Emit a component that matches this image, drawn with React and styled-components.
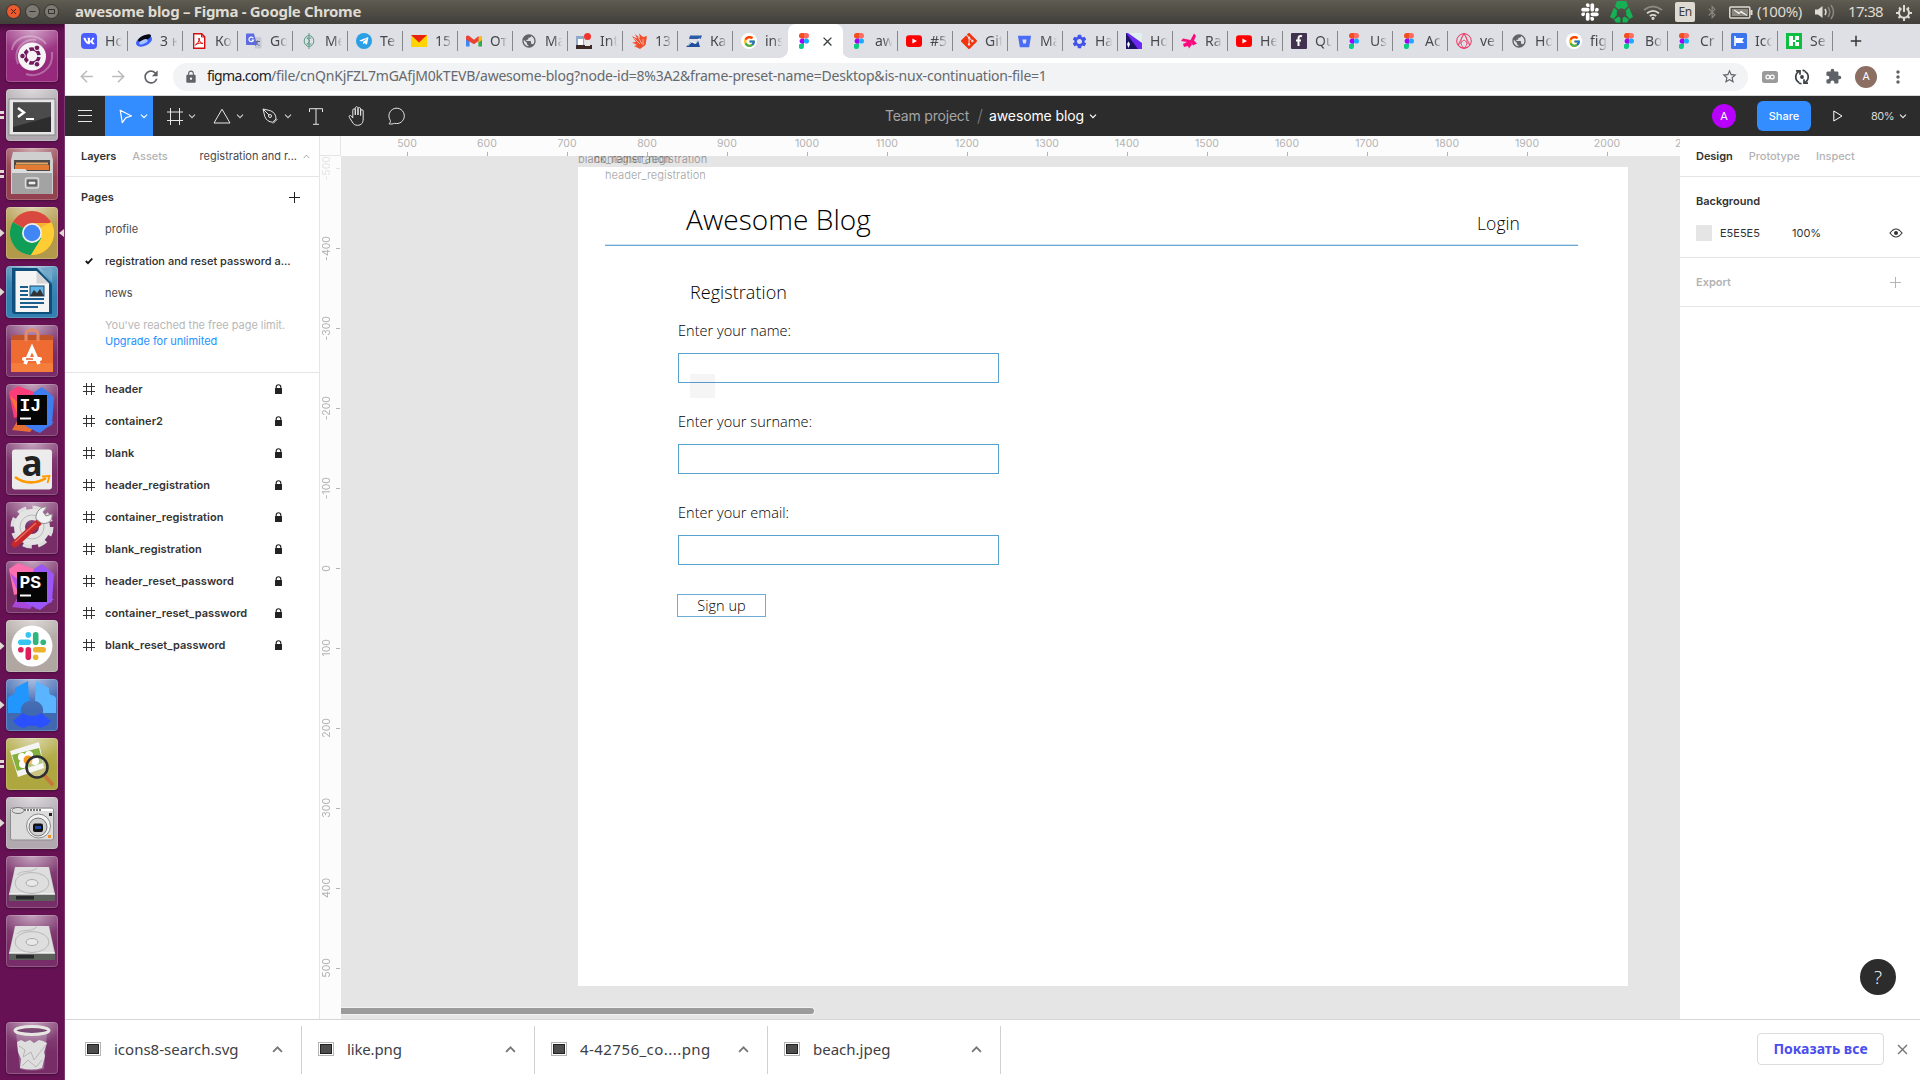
import React from 'react';
import styled, { createGlobalStyle, css } from 'styled-components';
import {
  MdExtension, MdStarBorder, MdLock, MdRefresh, MdArrowBack, MdArrowForward,
  MdClose, MdAdd, MdMoreVert, MdSettings, MdPublic,
} from 'react-icons/md';
import { FaVk, FaBluetoothB, FaSlack, FaTelegramPlane } from 'react-icons/fa';
import { FcGoogle } from 'react-icons/fc';
import { SiGit, SiBitbucket } from 'react-icons/si';

const ui = '"Noto Sans", "Open Sans", sans-serif';
const figma = 'Inter, "Liberation Sans", sans-serif';
const design = '"Open Sans", Lato, sans-serif';

const GlobalStyle = createGlobalStyle`
  * { box-sizing: border-box; }
  body { margin: 0; overflow: hidden; background: #fff; }
  svg { display: block; flex: none; }
`;

const Screen = styled.div`
  width: 1920px; height: 1080px; overflow: hidden;
  display: flex; flex-direction: column;
`;

/* ---------- system bar ---------- */
const SystemBar = styled.header`
  height: 24px; flex: none; display: flex; align-items: center;
  padding: 0 8px 0 6px;
  background: linear-gradient(#5f5c52 0, #57544b 25%, #403f3a 100%);
  color: #dfdbd2; font-family: ${ui};
`;
const WindowButtons = styled.div`display: flex; gap: 4px; width: 69px;`;
const WindowTitle = styled.div`
  font-size: 15px; font-weight: 700; letter-spacing: -0.3px; line-height: 22px; height: 24px; flex: 1;
`;
const Tray = styled.div`display: flex; align-items: center; height: 24px;`;
const TrayItem = styled.div`
  display: flex; align-items: center; justify-content: center;
  width: ${(p) => p.$w}px; margin-right: ${(p) => p.$gap || 0}px;
`;
const TrayText = styled.span`
  font-size: 15px; line-height: 23px; height: 24px; white-space: nowrap;
  letter-spacing: ${(p) => p.$ls}px; width: ${(p) => p.$w}px; margin-right: ${(p) => p.$gap || 0}px;
`;
const Lang = styled.span`
  width: 20px; height: 20px; border-radius: 2px; margin-right: 12px; background: #dfdbd2;
  color: #3c3b37; font-size: 12px; line-height: 20px; text-align: center; letter-spacing: -0.5px;
`;

const Body = styled.div`flex: 1; display: flex; min-height: 0;`;

/* ---------- launcher ---------- */
const Launcher = styled.nav`
  width: 65px; flex: none; padding: 6px 0; display: flex; flex-direction: column; gap: 7px;
  background: linear-gradient(#3e0a34 0, #651153 8px); border-right: 1px solid #7c3a70;
`;
const LauncherRow = styled.div`
  display: flex; align-items: center; height: 52px;
  margin-top: ${(p) => (p.$last ? 'auto' : '0')};
`;
const Pip = styled.div`width: 6px; height: 12px; flex: none;`;
const Tile = styled.div`
  width: 52px; height: 52px; border-radius: 4px; flex: none;
  background:
    radial-gradient(ellipse 60% 45% at 50% 0, rgba(255,255,255,.5), rgba(255,255,255,0)),
    linear-gradient(rgba(255,255,255,.14), rgba(255,255,255,0) 60%),
    ${(p) => p.$color};
  box-shadow: inset 0 0 0 1px rgba(255,255,255,.2), 0 1px 2px rgba(0,0,0,.3);
`;

/* ---------- browser ---------- */
const Browser = styled.div`flex: 1; min-width: 0; display: flex; flex-direction: column; background: #fff;`;
const TabStrip = styled.div`
  height: 34px; flex: none; display: flex; align-items: center; padding-left: 8px; background: #dee0e6;
`;
const tabActive = css`
  position: relative; height: 34px; background: #fff; border-radius: 8px 8px 0 0;
  &::before, &::after {
    content: ''; position: absolute; bottom: 0; width: 8px; height: 8px;
  }
  &::before { left: -8px; background: radial-gradient(circle at 0 0, transparent 7.5px, #fff 8px); }
  &::after { right: -8px; background: radial-gradient(circle at 100% 0, transparent 7.5px, #fff 8px); }
`;
const Tab = styled.div`
  width: 55px; height: 20px; flex: none; display: flex; align-items: center; gap: 8px; padding-left: 8px;
  border-right: 1px solid ${(p) => (p.$line ? '#85878b' : 'transparent')};
  ${(p) => p.$active && tabActive}
`;
const Favicon = styled.div`
  width: 16px; height: 16px; flex: none; display: flex; align-items: center; justify-content: center;
  border-radius: ${(p) => p.$radius || 0}; background: ${(p) => p.$bg || 'none'};
`;
const TabTitle = styled.span`
  width: 18px; overflow: hidden; white-space: nowrap; color: #45484d;
  font: 14px/20px ${ui};
  mask-image: linear-gradient(90deg, #000 45%, transparent 96%);
`;
const NewTab = styled.div`padding-left: 14px; color: #333;`;

const AddressBar = styled.div`
  height: 38px; flex: none; display: flex; align-items: center; padding: 0 0 0 12px;
  border-bottom: 1px solid #d5d6d9;
`;
const NavButton = styled.div`width: 32px; color: ${(p) => (p.$off ? '#babcbe' : '#5f6368')};`;
const Omnibox = styled.div`
  width: 1575px; flex: none; height: 28px; border-radius: 14px; background: #f1f3f4;
  display: flex; align-items: center; padding: 0 10px 0 11px; color: #5f6368;
`;
const Url = styled.div`
  flex: 1; height: 28px; margin-left: 9px; white-space: nowrap; font: 14px/26px ${ui}; letter-spacing: -0.22px; color: #66696e;
`;
const Domain = styled.span`color: #202124; letter-spacing: -0.66px;`;
const Extensions = styled.div`
  display: flex; align-items: center; margin-left: 13px; color: #5f6368;
`;
const Ext = styled.div`width: ${(p) => p.$w}px; display: flex; justify-content: center;`;
const Profile = styled.div`
  width: 22px; height: 22px; margin: 0 11px 0 13px; border-radius: 50%; background: #8d6e63; color: #fff;
  font: 11px/22px Roboto, sans-serif; text-align: center;
`;

/* ---------- editor ---------- */
const Toolbar = styled.div`
  height: 40px; flex: none; display: flex; align-items: center; background: #2c2c2c; color: #fff;
  font-family: ${figma};
`;
const Tool = styled.div`
  width: ${(p) => p.$w}px; height: 40px; display: flex; align-items: center; flex: none;
  padding-left: ${(p) => p.$pad || 0}px; gap: ${(p) => p.$gap || 0}px;
  background: ${(p) => (p.$active ? '#338dff' : 'none')};
`;
const Crumbs = styled.div`
  margin-left: 473px; width: 600px; display: flex; align-items: center; font-size: 14px; line-height: 40px;
`;
const Team = styled.span`color: #a5a5a5; letter-spacing: -0.2px; width: 92px;`;
const Slash = styled.span`color: #7a7a7a; width: 12px; font-size: 17px; font-weight: 300;`;
const FileName = styled.span`letter-spacing: -0.11px; margin-right: 5px;`;
const ToolbarEnd = styled.div`margin-left: auto; display: flex; align-items: center; padding-right: 13px;`;
const UserBadge = styled.div`
  width: 24px; height: 24px; border-radius: 50%; background: #b800ff; font-size: 11px; line-height: 24px;
  text-align: center; margin-right: 21px;
`;
const Share = styled.div`
  width: 54px; height: 30px; border-radius: 6px; background: #338dff; font-size: 11px; font-weight: 500;
  line-height: 30px; text-align: center; margin-right: 22px;
`;
const ZoomLevel = styled.span`font-size: 11px; letter-spacing: -0.5px; margin: 0 5px 0 28px; color: #d8d8d8;`;

const Editor = styled.div`flex: 1; min-height: 0; display: flex; font-family: ${figma}; font-size: 11px; color: #333;`;
const LeftPanel = styled.aside`
  width: 255px; flex: none; border-right: 1px solid #e5e5e5; background: #fff;
`;
const PanelTabs = styled.div`
  height: 41px; display: flex; align-items: center; border-bottom: 1px solid #e5e5e5; padding: 0 9px 0 16px;
`;
const PanelTab = styled.span`
  font-weight: ${(p) => (p.$on ? 600 : 500)}; color: ${(p) => (p.$on ? '#333' : '#b3b3b3')};
  margin-right: 16px; letter-spacing: -0.04px;
`;
const PageName = styled.span`margin: 0 6px 0 auto; color: #4a4a4a;`;
const Pages = styled.section`height: 196px; border-bottom: 1px solid #e5e5e5;`;
const PagesHead = styled.div`
  height: 40px; margin-bottom: -4px; display: flex; align-items: center; justify-content: space-between;
  padding: 0 19px 0 16px; font-weight: 600;
`;
const PageRow = styled.div`
  height: 32px; display: flex; align-items: center; padding-left: 20px; color: #4a4a4a;
  font-weight: ${(p) => (p.$on ? 500 : 400)};
  ${(p) => p.$on && 'color: #2c2c2c;'}
`;
const Mark = styled.div`width: 20px; flex: none;`;
const Limit = styled.div`padding: 8px 0 0 40px; line-height: 16px; color: #b8b8b8; letter-spacing: -0.04px;`;
const Upgrade = styled.div`color: #2492ff; line-height: 16px;`;
const LayerRow = styled.div`
  height: 32px; display: flex; align-items: center; padding: 0 37px 0 18px; font-weight: 600;
`;
const LayerName = styled.span`flex: 1; margin-left: 10px; letter-spacing: 0.06px;`;

const Workspace = styled.main`
  width: 1360px; flex: none; display: grid; grid-template: 20px 1fr / 21px 1fr; background: #fcfcfc;
`;
const Corner = styled.div`border-right: 1px solid #e5e5e5; border-bottom: 1px solid #e5e5e5;`;
const RulerX = styled.div`display: flex; padding-left: 26px; overflow: hidden; color: #b3b3b3;`;
const MarkX = styled.div`
  width: 80px; height: 20px; flex: none; display: flex; flex-direction: column; align-items: center;
  font-size: 10.5px; line-height: 16px;
  &::after { content: ''; width: 1px; height: 4px; background: #b3b3b3; }
`;
const RulerY = styled.div`overflow: hidden; color: #b3b3b3; display: flex; flex-direction: column;`;
const MarkY = styled.div`
  height: 80px; width: 20px; flex: none; display: flex; align-items: center; justify-content: space-between;
  font-size: 10.5px; opacity: ${(p) => (p.$faded ? 0.35 : 1)};
  &:first-child { margin-top: -28px; }
  &::after { content: ''; width: 4px; height: 1px; background: #b3b3b3; }
`;
const Turned = styled.span`writing-mode: vertical-rl; transform: rotate(180deg); line-height: 13px; width: 13px;`;

const Canvas = styled.div`
  position: relative; overflow: hidden; background: #e5e5e5; padding: 11px 0 0 237px;
`;
const FrameLabel = styled.span`
  position: absolute; left: ${(p) => p.$x}px; top: ${(p) => p.$y}px; line-height: 14px; color: rgba(0,0,0,.34);
`;
const Artboard = styled.div`
  width: 1050px; height: 819px; background: #fff; color: #000; font-family: ${design}; font-weight: 300;
`;
const BlogHeader = styled.div`
  margin: 0 0 0 27px; width: 973px; height: 79px; display: flex; justify-content: space-between; align-items: flex-start;
  padding: 0 58px 0 81px; border-bottom: 1px solid #69a9d3; box-shadow: inset 0 -1px #cfe4f2;
`;
const BlogTitle = styled.div`margin-top: 35px; font-size: 28px; line-height: 34px; letter-spacing: .07px;`;
const Login = styled.div`margin-top: 45px; font-size: 17.5px; line-height: 22px; letter-spacing: .06px;`;
const Form = styled.div`width: 321px; margin: 35px 0 0 100px; font-size: 14.5px; letter-spacing: .04px;`;
const FormTitle = styled.div`padding-left: 12px; font-size: 18px; line-height: 22px; letter-spacing: .06px; margin-bottom: 19px;`;
const Fields = styled.div`display: flex; flex-direction: column; gap: 30px;`;
const Label = styled.div`line-height: 18px; margin-bottom: 13px;`;
const Field = styled.div`height: 30px; border: 1px solid #5ba1d0;`;
const SignUp = styled.div`
  width: 89px; height: 23px; margin: 29px 0 0 -1px; border: 1px solid #6cacd6; text-align: center; line-height: 21px;
`;
const GhostCursor = styled.div`
  position: absolute; left: 349px; top: 218px; width: 25px; height: 24px; background: rgba(0,0,0,.04);
`;
const ScrollThumb = styled.div`
  position: absolute; left: 0; bottom: 5px; width: 473px; height: 6px; border-radius: 0 3px 3px 0;
  background: #9b9b9b; box-shadow: 0 0 0 1px #f0f0f0;
`;

const RightPanel = styled.aside`flex: 1; background: #fff; display: flex; flex-direction: column;`;
const Section = styled.section`border-bottom: 1px solid #e5e5e5; padding: ${(p) => p.$pad};`;
const SectionTitle = styled.div`
  display: flex; justify-content: space-between; align-items: center; line-height: 16px;
  font-weight: 600; color: ${(p) => (p.$muted ? '#b3b3b3' : '#333')};
`;
const ColorRow = styled.div`display: flex; align-items: center; height: 16px; margin-top: 16px;`;
const Swatch = styled.div`width: 16px; height: 16px; background: #e5e5e5; margin-right: 8px;`;
const Value = styled.span`width: ${(p) => p.$w}px;`;
const HelpSlot = styled.div`margin-top: auto; padding: 0 24px 24px; display: flex; justify-content: flex-end;`;
const Help = styled.div`
  width: 36px; height: 36px; border-radius: 50%; background: #2c2c2c; color: #fff; text-align: center;
  font: 300 19px/36px "Open Sans", sans-serif;
`;

/* ---------- downloads ---------- */
const Downloads = styled.footer`
  height: 61px; flex: none; border-top: 1px solid #d5d6d9; display: flex; align-items: center; background: #fff;
  font-family: ${ui};
`;
const Download = styled.div`
  width: 233px; height: 48px; display: flex; align-items: center; padding: 0 18px 2px 16px;
  border-right: 1px solid #cfd0d2;
  &:first-child { width: 237px; padding-left: 20px; }
`;
const FileLabel = styled.span`
  flex: 1; margin-left: 13px; font-size: 15px; color: #3d4045; letter-spacing: ${(p) => p.$ls}px;
`;
const ShowAll = styled.div`
  margin-left: auto; width: 127px; height: 32px; margin-bottom: 2px; border: 1px solid #dadce0; border-radius: 4px; color: #4a4df0;
  font-size: 14px; font-weight: 700; line-height: 30px; text-align: center;
`;
const CloseSlot = styled.div`width: 36px; padding-bottom: 2px; display: flex; justify-content: center; color: #75777a;`;

/* ---------- small drawings ---------- */
const Chevron = ({ up, color = '#c9c9c9', w = 8, sw = 1.2 }) => (
  <svg width={w} height={w} viewBox="0 0 8 8" fill="none" stroke={color} strokeWidth={sw}>
    <path d={up ? 'M.8 5.8 4 2.4l3.2 3.4' : 'M1 2.6 4 5.6l3-3'} />
  </svg>
);
const Plus = ({ color }) => (
  <svg width="11" height="11" stroke={color}><path d="M5.5 0v11M0 5.5h11" /></svg>
);
const HashIcon = () => (
  <svg width="12" height="12" stroke="#333" fill="none"><path d="M3.5 0v12M8.5 0v12M0 3.5h12M0 8.5h12" /></svg>
);
const LockIcon = () => (
  <svg width="7" height="10" fill="#222"><rect y="4" width="7" height="6" rx=".5" /><path d="M1.2 5V3a2.3 2.3 0 0 1 4.6 0v2" fill="none" stroke="#222" strokeWidth="1.1" /></svg>
);
const FigmaMark = () => (
  <svg width="10" height="16" viewBox="0 0 10 16">
    <path d="M2.7 0H5v5.4H2.7a2.7 2.7 0 0 1 0-5.4z" fill="#f24e1e" /><path d="M5 0h2.3a2.7 2.7 0 0 1 0 5.4H5z" fill="#ff6d62" />
    <path d="M2.7 5.4H5v5.3H2.7a2.7 2.7 0 0 1 0-5.3z" fill="#a100ff" /><circle cx="7.4" cy="8" r="2.6" fill="#1aaaff" />
    <path d="M2.7 10.7H5v2.6a2.7 2.7 0 1 1-2.3-2.6z" fill="#0acf83" />
  </svg>
);
const Globe = () => <MdPublic size={16} color="#5f6368" />;
const YouTube = () => (
  <svg width="16" height="16"><rect x="0" y="2.3" width="16" height="11.6" rx="3" fill="#f00" /><path d="M6.4 5.4v5.2L11 8z" fill="#fff" /></svg>
);
const Google = () => <FcGoogle size={13} />;
const s16 = { width: 16, height: 16, viewBox: '0 0 16 16' };

const tabs = [
  ['Но', <FaVk size={12} color="#fff" />, '#4a5dff', '4px'],
  ['3 к', <svg {...s16}><ellipse cx="8" cy="8" rx="8.4" ry="5" transform="rotate(-24 8 8)" fill="#3d63ff" /><ellipse cx="8.5" cy="5.2" rx="7" ry="2.6" transform="rotate(-24 8 5)" fill="#06080f" /><ellipse cx="7.5" cy="9" rx="4.5" ry="2" transform="rotate(-24 7 9)" fill="#a9c4ff" /></svg>],
  ['Ко', <svg {...s16}><path d="M2.7.7h8l3 3.2v11.4h-11z" fill="#fff" stroke="#d40f0f" strokeWidth="1.4" /><path d="M10.5 1v3H14" fill="none" stroke="#d40f0f" /><path d="M8 5c.6 3-1.2 5.500-3.600 7 2.500-2 5-2.300 7.500-1.600C10 10.500 8 8.500 8 5z" fill="none" stroke="#d40f0f" /></svg>],
  ['Go', <svg {...s16}><path d="M7 4h7.500q1 0 1 1v9.500q0 1-1 1H9z" fill="#c7cad4" /><path d="M9 8.500h5M11.500 7.500c0 3-1 4-2.500 5M10 9c1 2 2 3 3.500 3.500" stroke="#5f6a86" fill="none" /><path d="M1 .5h7l3 11.500H1q-1 0-1-1V1.500q0-1 1-1z" fill="#5d6bdf" /><path d="M7.300 5.200A2.300 2.300 0 1 0 7.500 7H5.500" stroke="#fff" fill="none" strokeWidth="1.200" /></svg>],
  ['Ме', <svg {...s16} stroke="#5c9a86" fill="none"><ellipse cx="8" cy="8" rx="4.800" ry="5.500" /><path d="M8 0v16M5.500 5h5M5.500 11h5M6 5l3 3-3 3" /></svg>],
  ['Те', <FaTelegramPlane size={10} color="#fff" />, '#2a9fe6', '50%'],
  ['15', <svg {...s16}><path d="M0 2h16v12H0z" fill="#ffd400" /><path d="M0 2h16L8 9.500z" fill="#e8230e" /></svg>],
  ['От', <svg {...s16}><path d="M0 3.500v10h3.600V7z" fill="#4285f4" /><path d="M16 3.500v10h-3.600V7z" fill="#34a853" /><path d="M12.400 3.800 16 3v4l-3.600 2.600z" fill="#fbbc04" /><path d="M0 4c0-1.700 2-2 3.200-1L8 6.700 12.600 3v5L8 11.300 0 6.500z" fill="#ea4335" /></svg>],
  ['Ма', <Globe />],
  ['Int', <svg {...s16}><path d="M0 3h8v12H0z" fill="#8fa9c8" /><path d="M0 12h16v4H0z" fill="#3c2a27" /><path d="M2 6h5v6H2z" fill="#fff" /><path d="M9 7h5v6H9z" fill="#e9e6e4" /><circle cx="11.500" cy="3.500" r="3.500" fill="#f0332e" /></svg>],
  ['13', <svg {...s16}><path d="M1 3l5 2.500L4 1l5 4L8 .5l4 3.500 4-1-1.500 9L9 16l-6-3 3-1-5-2.500 4-.5z" fill="#f1502f" /><path d="M3 5l6 6M7 4l4 7M12 6v6" stroke="#fbd9cf" strokeWidth=".7" /></svg>],
  ['Ка', <svg {...s16}><path d="M4 2.500h12l-1.500 3.500H3z" fill="#2b5ca8" /><path d="M15 3l-3 4 2 7H0l5-5 4 2z" fill="#1f4f9d" /><path d="M2 12.500 6.500 8.500l3.500 2L13.500 5" stroke="#fff" fill="none" strokeWidth=".8" /></svg>],
  ['ins', <Google />, '#fff', '50%'],
  null,
  ['aw', <FigmaMark />],
  ['#5', <YouTube />],
  ['Git', <SiGit size={16} color="#f4320b" />],
  ['Ма', <SiBitbucket size={13} color="#4a6cf7" />],
  ['Ha', <MdSettings size={17} color="#4353e8" />],
  ['Но', <svg {...s16}><path d="M0 0h16v16H0z" fill="#6d28f5" /><path d="M2 0h14v10z" fill="#dff0ee" /><path d="M0 0l12 16H0z" fill="#1b1464" /><path d="M1 11l1.500-2.500L4 11l-1.500 4z" fill="#fff" /></svg>],
  ['Ra', <svg {...s16} fill="#fb0a7d"><path d="M9 8 13 .5l2 2.500-2 4.500 3 3-4 2z" /><path d="M9.500 7 2 5.500 0 8l6 1-4 2 1 3 4-1 1 2.500 3-4z" /></svg>],
  ['Не', <YouTube />],
  ['Qu', <svg {...s16}><rect width="16" height="16" rx="1" fill="#413250" /><path d="M11 3.200C8.500 2.500 7.500 3.500 7.500 5.500V13M5 7.500h5" stroke="#fff" strokeWidth="2" fill="none" /></svg>],
  ['Us', <FigmaMark />],
  ['Ac', <FigmaMark />],
  ['ve', <svg {...s16} fill="none" stroke="#f0305f"><circle cx="8" cy="8" r="7.300" /><path d="M8 .5 2 12c3 4 9 4 12 0zM8 .5C4 6 4 12 8 15.500 12 12 12 6 8 .5M2 12l6-5 6 5" strokeWidth=".8" /></svg>],
  ['Но', <Globe />],
  ['fig', <Google />, '#fff', '50%'],
  ['Bo', <FigmaMark />],
  ['Cr', <FigmaMark />],
  ['Ico', <svg {...s16}><rect width="16" height="16" rx="1.500" fill="#3b74ec" /><path d="M4 3v10" stroke="#fff" strokeWidth="1.600" /><path d="M4.500 5H13l-1.800 2.500L13 10H4.500z" fill="#fff" /></svg>],
  ['Se', <svg {...s16}><path d="M0 0h16v16H0z" fill="#0dbf3f" /><path d="M3 3h4v10H3zM9 3h4v4H9zM9 9h4v4H9zM7 7h3v2H7z" fill="#fff" /></svg>],
];

const Jet = ({ text, a, b, c }) => (
  <svg width="52" height="52">
    <path d="M3 8 12 2l16 6 6 18-26 8z" fill={a} /><path d="M28 8 36 3l12 10-2 28-16 7-10-14z" fill={b} />
    <path d="M4 12l9 22-7 12 18 2 10-12z" fill={c} opacity=".85" /><path d="M14 36h20l14 2-14 11-13-6z" fill={b} />
    <path d="M11 11h30v30H11z" fill="#050505" /><path d="M14 34.500h11" stroke="#fff" strokeWidth="2" />
    <text x="13.500" y="27" fill="#fff" fontFamily="Liberation Mono, monospace" fontWeight="700" fontSize="18">{text}</text>
  </svg>
);
const Disk = () => (
  <svg width="52" height="52">
    <path d="M9 11h34l6 27v6H3v-6z" fill="#c9c9c9" /><path d="M9.500 11h33l5.500 27H4z" fill="#dedede" />
    <path d="M3 38.500h46V44q0 1-1 1H4q-1 0-1-1z" fill="#5c615c" /><path d="M10 40h18v3.500H10z" fill="#26282a" />
    <path d="M3 38h46" stroke="#fff" /><ellipse cx="26" cy="27" rx="17" ry="10.500" fill="none" stroke="#b9b9b9" />
    <ellipse cx="26" cy="27" rx="6" ry="3.500" fill="#e8e8e8" stroke="#aaa" /><path d="M11 19c6-6 12-1 20-7" fill="none" stroke="#bbb" />
  </svg>
);

const CLEAR = 'rgba(255,255,255,.12)';
const apps = [
  ['#96297c', null, <svg width="52" height="52"><path d="M6 20C8 4 32 2 40 14M46 22c2 18-14 26-26 22M12 34C6 20 18 8 30 10" fill="none" stroke="#fff" strokeOpacity=".3" strokeWidth="2" /><circle cx="26" cy="26.500" r="14" fill="#f6f4f5" /><circle cx="26" cy="26" r="7" fill="none" stroke="#741b5f" strokeWidth="3.600" strokeDasharray="12.600 2" strokeDashoffset="-1" /><g fill="#741b5f" stroke="#f6f4f5"><circle cx="16.500" cy="26" r="2.800" /><circle cx="31" cy="17.800" r="2.800" /><circle cx="31" cy="34.300" r="2.800" /></g></svg>],
  ['#aea8ae', 'multi', <svg width="52" height="52"><rect x="3" y="10" width="46" height="36" fill="#e6e6e6" stroke="#8a8a8a" /><rect x="7" y="13.500" width="38" height="29.500" fill="#2d2d2d" /><path d="M7 13.500h38v14L7 38z" fill="#4b4b4b" /><path d="m12 19 6 4.500-6 4.500" fill="none" stroke="#fff" strokeWidth="2.400" /><path d="M20 30h8" stroke="#fff" strokeWidth="2" /></svg>],
  ['#934150', 'multi', <svg width="52" height="52"><path d="M7 4h38l2 8v34H5V12z" fill="#cfcfcf" /><path d="M8 12h36v12H8z" fill="#4c4a48" /><path d="M10 14.500h32v2H10z" fill="#e9a45e" /><path d="M9 17h34v5H9z" fill="#e37b33" /><path d="M6 21h13l2 2h25v23H6z" fill="#a3a3a3" /><path d="M6 21h13l2 2h25v2H6z" fill="#dcdcdc" /><rect x="19.500" y="30" width="13" height="10" rx="2" fill="#8b8b8b" stroke="#ddd" strokeWidth="1.500" /><rect x="22" y="33" width="8" height="4" fill="#eee" stroke="#333" /></svg>],
  ['#b3994a', 'focus', <svg width="52" height="52"><circle cx="26" cy="26" r="22" fill="#fc3" /><path d="M26 26 6.900 15A22 22 0 0 1 45 15z" fill="#d9493f" /><path d="M6.900 15A22 22 0 0 0 25 48L35.500 31 26 26z" fill="#0f9d58" /><path d="M25 48A22 22 0 0 0 45.500 16H26l9.500 15z" fill="#fc3c" /><circle cx="26" cy="26" r="10" fill="#f1f1f1" /><circle cx="26" cy="26" r="8.300" fill="#4285f4" /></svg>],
  ['#3480b0', 'one', <svg width="52" height="52"><path d="M6 2h25l15 16v30H9q-3 0-3-3z" fill="#0f4f7c" /><path d="M35 2h11v14z" fill="#72a8c9" /><path d="M9.500 5h21L43 17.500V46h-33.500z" fill="#f5f5f5" /><path d="M30.500 5 43 17.500H30.500z" fill="#d5d5d5" /><path d="M14 21h8M14 25h8M14 29h8M14 33h24M14 37h24M14 41h18" stroke="#1b5e8c" strokeWidth="1.800" /><rect x="24" y="20" width="14" height="10" fill="#5fb3e6" stroke="#1b4a68" /><path d="m24 30 4-6 3 3 3-4 4 7z" fill="#333" /></svg>],
  [CLEAR, null, <svg width="52" height="52"><path d="M5 12l3-2h36l3 2v35H5z" fill="#ee6c32" /><path d="M5 12l3-2h36l3 2v3H5z" fill="#c2542a" /><path d="M5 38h42v9H5z" fill="#f57d3c" /><path d="M20 16V9q0-4 6-4t6 4v7" fill="none" stroke="#e28b6b" strokeWidth="3" /><path d="m19 39 7-16 7 16" fill="none" stroke="#fff" strokeWidth="3.600" /><path d="M18 34h16" stroke="#fff" strokeWidth="4" strokeLinecap="round" /><path d="M20 34h7" stroke="#e05e28" strokeWidth="1.500" /></svg>],
  [CLEAR, null, <Jet text="IJ" a="#fb3d7a" b="#3f7cf0" c="#f87a2c" />],
  [CLEAR, null, <svg width="52" height="52"><rect x="6" y="6.500" width="40" height="40" rx="3" fill="#ececec" /><text x="15.500" y="33" fontFamily="Open Sans, sans-serif" fontWeight="700" fontSize="35" fill="#222">a</text><path d="M9 34c9 7 22 7 31 1" fill="none" stroke="#f90" strokeWidth="2.600" /><path d="m36 33.500 7.500-.5-2 7" fill="none" stroke="#f90" strokeWidth="1.800" /></svg>],
  [CLEAR, null, <svg width="52" height="52"><circle cx="26" cy="25" r="18.500" fill="none" stroke="#dcdcdc" strokeWidth="6" strokeDasharray="8.500 6.030" /><circle cx="26" cy="25" r="12.500" fill="none" stroke="#e4e4e4" strokeWidth="11" /><circle cx="26" cy="25" r="12" fill="none" stroke="#bcbcbc" /><path d="m9 42 23-21" stroke="#c6282a" strokeWidth="7" strokeLinecap="round" /><path d="m9 40 21-19" stroke="#e86a62" strokeWidth="1.500" /><path d="M30 17c-1-7 5-13 11-12l-4 5 3 4 6-2c1 7-5 11-11 9z" fill="#f1f1f1" stroke="#8d8d8d" /></svg>],
  [CLEAR, null, <Jet text="PS" a="#fb6fae" b="#9a56f7" c="#b04cf0" />],
  ['#b0a6a2', 'one', <svg width="52" height="52"><circle cx="26" cy="26" r="20.500" fill="#fff" /><g strokeWidth="5.600" strokeLinecap="round"><path d="M14.800 22.300h7.500" stroke="#36c5f0" /><path d="M22.300 14.800v.1" stroke="#36c5f0" /><path d="M29.700 14.800v7.500" stroke="#2eb67d" /><path d="M37.200 22.300h.1" stroke="#2eb67d" /><path d="M29.700 29.700h7.500" stroke="#ecb22e" /><path d="M29.700 37.200v.1" stroke="#ecb22e" /><path d="M22.300 29.700v7.500" stroke="#e01e5a" /><path d="M14.800 29.700h.1" stroke="#e01e5a" /></g></svg>],
  ['#4069b2', 'one', <svg width="52" height="52"><path d="M22 2 9 9c0 4 0 6-2 7-2 0-4 1-5 3v15h13c-1-6 2-11 8-12z" fill="#2196ff" /><path d="M30 2l13 7c0 4 0 6 2 7 2 0 4 1 5 3v15H37c1-6-2-11-8-12z" fill="#5bb4ff" /><path d="M17 34c5 4 13 4 18 0l10 8c-3 4-8 6-11 7q-3-3-8-2-5-1-8 2c-5-1-8-3-11-7z" fill="#2b50ff" /></svg>],
  ['#aea73f', 'multi', <svg width="52" height="52"><path d="m4 13 29-9 5 26-26 9z" fill="#f4f4f4" /><path d="m6 17 27-7 4 15-26 8z" fill="#84b03c" /><g fill="#fff"><circle cx="16" cy="19" r="4" /><circle cx="23" cy="17" r="4" /><circle cx="29" cy="23" r="4" /><circle cx="17" cy="26" r="4" /></g><circle cx="22" cy="22" r="4.500" fill="#f39a1d" /><path d="m39 38 7 8" stroke="#c57a3b" strokeWidth="4" strokeLinecap="round" /><circle cx="31" cy="29" r="10.500" fill="#fff" fillOpacity=".35" stroke="#2c2e31" strokeWidth="2.600" /></svg>],
  ['#b1a8b0', 'one', <svg width="52" height="52"><rect x="4.500" y="11" width="43" height="32" rx="2" fill="#dcdcdc" stroke="#8d8d8d" /><path d="M5 13h42" stroke="#fff" strokeWidth="2" /><ellipse cx="12" cy="13.500" rx="6" ry="3" fill="#ddd" stroke="#777" /><path d="M18 13h18" stroke="#777" strokeDasharray="2 1" strokeWidth="2" /><circle cx="32.500" cy="29" r="12" fill="#f3f3f3" stroke="#888" /><circle cx="32" cy="30" r="9" fill="#cfcfcf" stroke="#777" /><rect x="27" y="26.500" width="10" height="8.500" rx="2" fill="#111" /><path d="M29 29h6v3h-6z" fill="#2148a0" /><path d="M43 16h3v3h-3z" fill="#222" /><path d="M42 38h3v3h-3z" fill="#f0902a" /></svg>],
  [CLEAR, null, <Disk />],
  [CLEAR, null, <Disk />],
  [CLEAR, null, <svg width="52" height="52"><path d="m10 11 4 36q12 3 24 0l3-36z" fill="#d9d4dc" fillOpacity=".3" /><path d="m11 20 4-2 4 2 5-2 4 3 5-3 4 1 4 2-3 9 1 4-3 12q-10 3-22 0l1-9-3-7z" fill="#dedede" /><path d="m13 24 6 4-2 7 8-5 3 8 7-9 5-6M16 44l6-6 8 7 6-7" fill="none" stroke="#b5b5b5" /><ellipse cx="26" cy="8.500" rx="17" ry="4" fill="#5c2a56" fillOpacity=".6" stroke="#e6e6e2" strokeWidth="3" /></svg>],
];
const PipMark = ({ kind }) => (
  <Pip>
    <svg width="5" height="12" fill="#dfdbd2">
      {kind === 'multi' && <path d="M0 2h4v3H0zM0 7h4v3H0z" />}
      {(kind === 'one' || kind === 'focus') && <path d="M0 2l4.500 4L0 10z" />}
    </svg>
  </Pip>
);

const downloads = [
  ['icons8-search.svg', 0], ['like.png', -0.15], ['4-42756_co....png', 0.45], ['beach.jpeg', 0],
];
const layers = ['header', 'container2', 'blank', 'header_registration', 'container_registration',
  'blank_registration', 'header_reset_password', 'container_reset_password', 'blank_reset_password'];
const range = (a, n) => Array.from({ length: n }, (_, i) => a + i * 100);

const WinBtn = ({ fill, line, children }) => (
  <svg width="15" height="16" viewBox="0 0 15 16" fill="none" stroke={line}>
    <circle cx="7.500" cy="7.500" r="7" fill={fill} stroke="#34332f" />{children}
  </svg>
);

export default function App() {
  return (
    <Screen>
      <GlobalStyle />
      <SystemBar>
        <WindowButtons>
          <WinBtn fill="#ea5b2d" line="#4a1c0c"><path d="m5 5 5 5m0-5-5 5" /></WinBtn>
          <WinBtn fill="#7c7a72" line="#33322e"><path d="M4.500 7.500h6" /></WinBtn>
          <WinBtn fill="#7c7a72" line="#33322e"><path d="M4.500 5.500h6v4h-6z" /></WinBtn>
        </WindowButtons>
        <WindowTitle>awesome blog – Figma - Google Chrome</WindowTitle>
        <Tray>
          <TrayItem $w={20} $gap={10}><FaSlack size={20} color="#fff" /></TrayItem>
          <TrayItem $w={23} $gap={10}>
            <svg width="23" height="22" viewBox="0 0 23 22" fill="#17b155">
              <path d="M7 0h9l2 5-3.500 3.500a4.500 4.500 0 0 0-6 0L5 5z" />
              <path d="M4 6.500 7.300 9.700A5 5 0 0 0 7 14l-3.500 4L0 16z" />
              <path d="M19 6.500 15.700 9.700A5 5 0 0 1 16 14l3.500 4L23 16z" />
              <path d="M8.300 15.500 10.500 17v4.500H6l-2-3zM14.700 15.500 12.500 17v4.500H17l2-3z" />
            </svg>
          </TrayItem>
          <TrayItem $w={20} $gap={12}>
            <svg width="20" height="15" viewBox="0 0 20 15" fill="none" stroke="#dfdbd2" strokeWidth="1.800"><path d="M1 5q9-7 18 0" stroke="#8b887f" /><path d="M4 8.200q6-4.600 12 0M6.800 11q3.200-2.300 6.400 0" /><circle cx="10" cy="13.300" r=".7" /></svg>
          </TrayItem>
          <Lang>En</Lang>
          <TrayItem $w={9} $gap={13}><FaBluetoothB size={14} color="#8b887f" /></TrayItem>
          <TrayItem $w={24} $gap={4}>
            <svg width="24" height="13" fill="none" stroke="#dfdbd2"><rect x=".8" y="1" width="20" height="11" rx="1" strokeWidth="1.500" /><path d="M3 3h16v7H3z" fill="#8b887f" stroke="none" /><path d="M22.500 4v5" strokeWidth="2" /><path d="m5 4 5 4 1.500-2L18 9.500 12 5l-1.500 2z" fill="#fff" stroke="#fff" strokeWidth=".6" /></svg>
          </TrayItem>
          <TrayText $w={46} $ls={-0.37} $gap={12}>(100%)</TrayText>
          <TrayItem $w={20} $gap={13}>
            <svg width="20" height="16" viewBox="0 0 20 16" fill="none" strokeWidth="1.500"><path d="M0 5.500h3L7.500 2v12L3 10.500H0z" fill="#dfdbd2" /><path d="M10 5q2 3 0 6" stroke="#dfdbd2" /><path d="M13 3q3.500 5 0 10M16 1q5 7 0 14" stroke="#8b887f" /></svg>
          </TrayItem>
          <TrayText $w={36} $ls={-0.66} $gap={12}>17:38</TrayText>
          <svg width="16" height="17" viewBox="0 0 16 17" fill="none" stroke="#dfdbd2"><path d="M5.500 4.500a5 5 0 1 0 5 0" strokeWidth="2" /><path d="M8 1v7" strokeWidth="2" /><path d="M3 3.500l1.500 1.500M13 3.500 11.500 5M0 9h3M13 9h3M2.500 14l2-2M13.500 14l-2-2M8 14v3" strokeWidth="2" /></svg>
        </Tray>
      </SystemBar>

      <Body>
        <Launcher>
          {apps.map(([color, state, icon], i) => (
            <LauncherRow key={i} $last={i === apps.length - 1}>
              <PipMark kind={state} />
              <Tile $color={color}>{icon}</Tile>
              {state === 'focus' && <svg width="6" height="10" fill="#dfdbd2"><path d="M6 1v8L1 5z" /></svg>}
            </LauncherRow>
          ))}
        </Launcher>

        <Browser>
          <TabStrip>
            {tabs.map((t, i) => t ? (
              <Tab key={i} $line={i !== 12}>
                <Favicon $bg={t[2]} $radius={t[3]}>{t[1]}</Favicon>
                <TabTitle>{t[0]}</TabTitle>
              </Tab>
            ) : (
              <Tab key={i} $active>
                <Favicon><FigmaMark /></Favicon>
                <MdClose size={15} color="#3c4043" />
              </Tab>
            ))}
            <NewTab><MdAdd size={18} /></NewTab>
          </TabStrip>

          <AddressBar>
            <NavButton $off><MdArrowBack size={19} /></NavButton>
            <NavButton $off><MdArrowForward size={19} /></NavButton>
            <NavButton><MdRefresh size={20} /></NavButton>
            <Omnibox>
              <MdLock size={14} />
              <Url><Domain>figma.com</Domain>/file/cnQnKjFZL7mGAfjM0kTEVB/awesome-blog?node-id=8%3A2&amp;frame-preset-name=Desktop&amp;is-nux-continuation-file=1</Url>
              <MdStarBorder size={17} />
            </Omnibox>
            <Extensions>
              <Ext $w={18}><svg width="16" height="12"><rect width="16" height="12" rx="2.500" fill="#9b9b9b" /><circle cx="5.800" cy="6" r="1.900" fill="none" stroke="#fff" strokeWidth="1.200" /><circle cx="10.200" cy="6" r="1.900" fill="none" stroke="#fff" strokeWidth="1.200" /></svg></Ext>
              <Ext $w={46}><svg width="16" height="16" viewBox="0 0 16 16" fill="none" stroke="#3c4043" strokeWidth="1.700"><path d="M5.500 2.300A6.200 6.200 0 0 0 5 13.400M10.500 13.700A6.200 6.200 0 0 0 11 2.600" /><path d="M2 1.800h4v4M14 14.200h-4v-4" /><path d="M8.500 1.300c1 0 1.800.2 2.600.6M7.500 14.700c-1 0-1.800-.2-2.600-.6" /><circle cx="8" cy="8" r="1.900" fill="#3c4043" stroke="none" /></svg></Ext>
              <Ext $w={17}><MdExtension size={17} /></Ext>
              <Profile>A</Profile>
              <MdMoreVert size={20} />
            </Extensions>
          </AddressBar>

          <Toolbar>
            <Tool $w={40} $pad={13}><svg width="14" height="12" stroke="#e6e6e6"><path d="M0 .5h14M0 5.500h14M0 11.500h14" /></svg></Tool>
            <Tool $w={48} $pad={14} $gap={7} $active>
              <svg width="14" height="15" fill="none" stroke="#fff" strokeWidth="1.200"><path d="M1.200 1.200 12.500 7 7 8.600 3.300 13.600z" strokeLinejoin="round" /></svg>
              <Chevron color="#fff" />
            </Tool>
            <Tool $w={47} $pad={14} $gap={5}><svg width="16" height="17" stroke="#e6e6e6"><path d="M3.500 0v17M12.500 0v17M0 4h16M0 12.500h16" /></svg><Chevron /></Tool>
            <Tool $w={48} $pad={13} $gap={5}><svg width="18" height="16" fill="none" stroke="#e6e6e6"><path d="M9 1.200 17 15H1z" /></svg><Chevron /></Tool>
            <Tool $w={49} $pad={14} $gap={6}>
              <svg width="16" height="16" fill="none" stroke="#e6e6e6"><path d="M1 1 8.500 2.700Q14 5 14 11L10.700 14.200Q5 14 2.800 8.500zM1 1l6 6M15.300 11.200 11 15.500" /><circle cx="8" cy="8" r="1.500" /></svg><Chevron />
            </Tool>
            <Tool $w={38} $pad={12}><svg width="14" height="17" fill="none" stroke="#e6e6e6"><path d="M.5 4V.7h13V4M7 .7v15.500M4 16.300h6" /></svg></Tool>
            <Tool $w={38} $pad={13}>
              <svg width="18" height="20" fill="none" stroke="#e6e6e6"><path d="M4.800 12V4.200c0-1.900 2.500-1.900 2.500 0V9M7.300 9V2.200c0-2 2.700-2 2.700 0V9M10 9V2.900c0-1.900 2.600-1.900 2.600 0V9.500M12.600 9.500V5c0-1.800 2.600-1.800 2.600 0v8c0 4-2 6.300-5.600 6.300-3 0-4.200-1.300-5.300-3.300L1.300 11.300c-.9-1.600 1-2.600 2.100-1.200L4.800 12" /></svg>
            </Tool>
            <Tool $w={39} $pad={15}><svg width="19" height="18" fill="none" stroke="#e6e6e6"><path d="M1 16.800c1.300-1 1.500-2 1.300-3.500A7.700 7.700 0 1 1 6.500 16.300C5 17 3 17.300 1 16.800z" /></svg></Tool>
            <Crumbs><Team>Team project</Team><Slash>/</Slash><FileName>awesome blog</FileName><Chevron color="#fff" /></Crumbs>
            <ToolbarEnd>
              <UserBadge>A</UserBadge>
              <Share>Share</Share>
              <svg width="10" height="12" fill="none" stroke="#fff"><path d="M.8 1v10L9 6z" /></svg>
              <ZoomLevel>80%</ZoomLevel>
              <Chevron color="#e6e6e6" />
            </ToolbarEnd>
          </Toolbar>

          <Editor>
            <LeftPanel>
              <PanelTabs>
                <PanelTab $on>Layers</PanelTab><PanelTab>Assets</PanelTab>
                <PageName>registration and r...</PageName><Chevron up color="#999" w={7} sw={1} />
              </PanelTabs>
              <Pages>
                <PagesHead>Pages<Plus color="#222" /></PagesHead>
                <PageRow><Mark />profile</PageRow>
                <PageRow $on>
                  <Mark><svg width="8" height="8" fill="none" stroke="#111" strokeWidth="1.800"><path d="M.8 4 3 6.200 7.300 1.500" /></svg></Mark>
                  registration and reset password a...
                </PageRow>
                <PageRow><Mark />news</PageRow>
                <Limit>You've reached the free page limit.<Upgrade>Upgrade for unlimited</Upgrade></Limit>
              </Pages>
              {layers.map((l) => (
                <LayerRow key={l}><HashIcon /><LayerName>{l}</LayerName><LockIcon /></LayerRow>
              ))}
            </LeftPanel>

            <Workspace>
              <Corner />
              <RulerX>{range(500, 17).map((n) => <MarkX key={n}>{n}</MarkX>)}</RulerX>
              <RulerY>{range(-500, 11).map((n) => <MarkY key={n} $faded={n === -500}><Turned>{n}</Turned></MarkY>)}</RulerY>
              <Canvas>
                <Artboard>
                  <BlogHeader><BlogTitle>Awesome Blog</BlogTitle><Login>Login</Login></BlogHeader>
                  <Form>
                    <FormTitle>Registration</FormTitle>
                    <Fields>
                      {['name', 'surname', 'email'].map((f) => (
                        <div key={f}><Label>Enter your {f}:</Label><Field /></div>
                      ))}
                    </Fields>
                    <SignUp>Sign up</SignUp>
                  </Form>
                </Artboard>
                <FrameLabel $x={237} $y={-4}>blank_registration</FrameLabel>
                <FrameLabel $x={253} $y={-4}>container_registration</FrameLabel>
                <FrameLabel $x={264} $y={12}>header_registration</FrameLabel>
                <GhostCursor />
                <ScrollThumb />
              </Canvas>
            </Workspace>

            <RightPanel>
              <PanelTabs><PanelTab $on>Design</PanelTab><PanelTab>Prototype</PanelTab><PanelTab>Inspect</PanelTab></PanelTabs>
              <Section $pad="16px 17px 16px 16px">
                <SectionTitle>Background</SectionTitle>
                <ColorRow>
                  <Swatch /><Value $w={72}>E5E5E5</Value><Value $w={97}>100%</Value>
                  <svg width="14" height="10" fill="none" stroke="#333" strokeWidth="1.200"><path d="M1 5q6-8 12 0-6 8-12 0z" /><circle cx="7" cy="5" r="2" fill="#333" stroke="none" /></svg>
                </ColorRow>
              </Section>
              <Section $pad="16px 19px 16px 16px"><SectionTitle $muted>Export<Plus color="#b3b3b3" /></SectionTitle></Section>
              <HelpSlot><Help>?</Help></HelpSlot>
            </RightPanel>
          </Editor>

          <Downloads>
            {downloads.map(([name, ls]) => (
              <Download key={name}>
                <svg width="16" height="14"><rect x=".5" y=".5" width="15" height="13" fill="#fff" stroke="#b5b5b5" /><rect x="2.500" y="2.500" width="11" height="9" fill="#4d4d4d" stroke="#222" /></svg>
                <FileLabel $ls={ls}>{name}</FileLabel>
                <Chevron up color="#75777a" w={11} sw={1.3} />
              </Download>
            ))}
            <ShowAll>Показать все</ShowAll>
            <CloseSlot><MdClose size={17} /></CloseSlot>
          </Downloads>
        </Browser>
      </Body>
    </Screen>
  );
}
